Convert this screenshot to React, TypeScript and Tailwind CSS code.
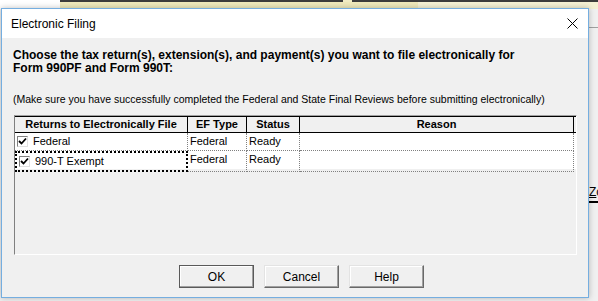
import React from "react";

const rows = [
  { name: "Federal", type: "Federal", status: "Ready", focused: false },
  { name: "990-T Exempt", type: "Federal", status: "Ready", focused: true },
];

function CheckBox() {
  return (
    <div className="flex h-[11px] w-[11px] shrink-0 items-center justify-center border-l border-t border-l-[#808080] border-t-[#808080] border-r border-b border-r-[#e0e0e0] border-b-[#e0e0e0] bg-white">
      <svg width="9" height="9" viewBox="0 0 9 9">
        <path d="M1 4 L3.5 6.5 L8 1.5" fill="none" stroke="#000" strokeWidth="1.8" />
      </svg>
    </div>
  );
}

function WinButton({ label, isDefault }: { label: string; isDefault?: boolean }) {
  return (
    <button
      className={`flex h-[23px] w-[75px] items-center justify-center bg-[#f0f0f0] text-[12px] shadow-[inset_-1px_-1px_0_#a0a0a0,inset_1px_1px_0_#ffffff] ${
        isDefault ? "border border-[#5a5a5a]" : "border border-t-[#e3e3e3] border-l-[#e3e3e3] border-r-[#696969] border-b-[#696969]"
      }`}
    >
      {label}
    </button>
  );
}

export default function App() {
  return (
    <div className="relative h-[301px] w-[598px] overflow-hidden bg-[#f0f0f0] font-['Liberation_Sans',Arial,sans-serif] text-black">
      {/* app behind the dialog */}
      <div className="flex h-[9px]">
        <div className="w-[60px] bg-white" />
        <div className="flex flex-1 flex-col">
          <div className="flex h-[2px]">
            <div className="w-[283px] bg-[#3c3c3c]" />
            <div className="w-[9px] bg-[#f1ecc4]" />
            <div className="flex-1 bg-[#3c3c3c]" />
          </div>
          <div className="flex flex-1">
            <div className="w-[358px] bg-[#efe9bb]" />
            <div className="flex-1 bg-[#f5f1d4]" />
          </div>
        </div>
      </div>
      <div className="absolute left-[588px] top-[27px] h-px w-[10px] bg-[#a0a0a0]" />
      <div className="absolute left-[588px] top-[184px] border-b-2 border-black pl-[1px] text-[12px] leading-[17px]">
        <span className="underline">Z</span>oom
      </div>

      {/* dialog window */}
      <div className="absolute left-[1px] top-[8px] flex h-[290px] w-[588px] flex-col border border-[#75aee0] bg-[#f0f0f0] shadow-[0_0_6px_rgba(0,0,0,0.25)]">
        <div className="flex h-[29px] shrink-0 items-center justify-between bg-white pl-[9px] pr-[10px]">
          <span className="font-['Segoe_UI','Liberation_Sans',sans-serif] text-[12px]">Electronic Filing</span>
          <svg width="11" height="11" viewBox="0 0 11 11">
            <path d="M0.5 0.5 L10.5 10.5 M10.5 0.5 L0.5 10.5" stroke="#000" strokeWidth="1" />
          </svg>
        </div>

        <div className="flex flex-1 flex-col">
          <p className="ml-[11px] mt-[11px] text-[12px] font-bold leading-[13px]">
            Choose the tax return(s), extension(s), and payment(s) you want to file electronically for
            <br />
            Form 990PF and Form 990T:
          </p>
          <p className="ml-[11px] mt-[18px] text-[10.5px] leading-[13px]">
            (Make sure you have successfully completed the Federal and State Final Reviews before submitting electronically)
          </p>

          {/* list box */}
          <div className="ml-[12px] mt-[9px] h-[140px] w-[563px] border border-l-[#808080] border-t-[#a0a0a0] border-r-white border-b-white bg-[#f0f0f0]">
            <div className="grid grid-cols-[173px_59px_53px_274px] border-t border-b border-black text-[11px] font-bold leading-[15px]">
              <div className="border-r border-black text-center">Returns to Electronically File</div>
              <div className="border-r border-black text-center">EF Type</div>
              <div className="border-r border-black text-center">Status</div>
              <div className="border-r border-black text-center">Reason</div>
            </div>
            {rows.map((r) => (
              <div key={r.name} className="grid h-[18px] grid-cols-[173px_59px_53px_274px] bg-white text-[11px] leading-[17px]">
                <div
                  className={`flex items-center gap-[5px] pl-[2px] ${
                    r.focused ? "border-2 border-dotted border-black" : "border-b border-r border-dotted border-[#808080]"
                  }`}
                >
                  <CheckBox />
                  <span>{r.name}</span>
                </div>
                <div className="border-b border-r border-dotted border-[#808080] pl-[2px]">{r.type}</div>
                <div className="border-b border-r border-dotted border-[#808080] pl-[2px]">{r.status}</div>
                <div className="border-b border-r border-dotted border-[#808080]" />
              </div>
            ))}
          </div>

          <div className="ml-[177px] mt-[10px] flex gap-[10px]">
            <WinButton label="OK" isDefault />
            <WinButton label="Cancel" />
            <WinButton label="Help" />
          </div>
        </div>
      </div>
    </div>
  );
}
